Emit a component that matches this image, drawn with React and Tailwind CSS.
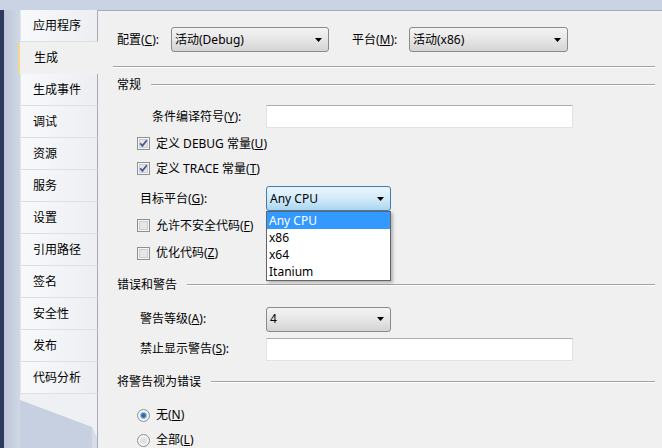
import React from "react";

const tabs = ["应用程序", "生成", "生成事件", "调试", "资源", "服务", "设置", "引用路径", "签名", "安全性", "发布", "代码分析"];

const Arrow = () => (
  <svg width="7" height="4" viewBox="0 0 7 4" className="shrink-0">
    <polygon points="0,0 7,0 3.5,4" fill="#000" />
  </svg>
);

const Check = ({ checked }) => (
  <svg width="13" height="13" viewBox="0 0 13 13" className="shrink-0">
    <rect x="0.5" y="0.5" width="12" height="12" fill="#f6f6f6" stroke="#8e8f8f" />
    <rect x="2.5" y="2.5" width="8" height="8" fill="#e6e6e6" stroke="#cdcdcd" />
    {checked && <path d="M3.2 6.2 L5.4 8.8 L9.8 3.2" stroke="#42559a" strokeWidth="1.7" fill="none" />}
  </svg>
);

const Radio = ({ checked }) => (
  <svg width="13" height="13" viewBox="0 0 13 13" className="shrink-0">
    <circle cx="6.5" cy="6.5" r="6" fill="#f4f4f4" stroke="#8e8f8f" />
    {checked ? (
      <>
        <circle cx="6.5" cy="6.5" r="3.6" fill="#9cc3e6" />
        <circle cx="6.5" cy="6.5" r="2.4" fill="#2c6cb4" />
      </>
    ) : (
      <circle cx="6.5" cy="6.5" r="3.6" fill="#e2e2e2" />
    )}
  </svg>
);

const Select = ({ value, width, focused }) => (
  <div
    className={`h-[25px] ${width} rounded-[3px] border flex items-center justify-between pl-[3px] pr-[6px] ${
      focused
        ? "border-[#3c7fb1] bg-gradient-to-b from-[#eaf6fd] via-[#d3ebf9] to-[#a9d6f1]"
        : "border-[#8a8a8a] bg-gradient-to-b from-[#f4f4f4] via-[#e6e6e6] to-[#d4d4d4]"
    }`}
  >
    <span>{value}</span>
    <Arrow />
  </div>
);

const TextBox = () => (
  <div className="h-[23px] w-[307px] bg-white border border-[#dde3ea] border-t-[#abadb3]" />
);

const Group = ({ title }) => (
  <div className="h-[18px] flex items-center pl-[19px] pr-[7px]">
    <span>{title}</span>
    <div className="flex-1 ml-[10px] h-[2px] border-t border-[#a3a3a3] border-b border-b-white" />
  </div>
);

const CheckRow = ({ checked, children, className }) => (
  <div className={`h-[16px] flex items-center pl-[39px] gap-[6px] ${className}`}>
    <Check checked={checked} />
    <span>{children}</span>
  </div>
);

export default function App() {
  return (
    <div className="w-[662px] h-[448px] overflow-hidden bg-[#c8d2e1] flex flex-col font-['Noto_Sans','Noto_Sans_CJK_SC',sans-serif] text-[12px] text-black leading-none">
      <div className="h-[10px] shrink-0 bg-[#c9d3e3]" />
      <div className="flex flex-1 min-h-0">
        <div className="w-[4px] bg-[#2c3b5d]" />
        <div className="w-[16px] bg-gradient-to-r from-[#bcc7d8] to-[#d0d8e5]" />

        {/* tab strip */}
        <div className="w-[78px] flex flex-col">
          {tabs.map((t, i) =>
            i === 1 ? (
              <div
                key={t}
                className="h-[32px] -ml-[2px] pl-[14px] flex items-center bg-[#f0f0f0] border-l-2 border-[#f3d88e] rounded-l-[2px]"
              >
                {t}
              </div>
            ) : (
              <div
                key={t}
                className="h-[32px] pl-[12px] flex items-center bg-gradient-to-r from-[#f8f9fb] to-[#eceef2] border-r border-[#a5adb9] border-b border-b-[#dcdfe5] border-l border-l-[#e2e6ec]"
              >
                {t}
              </div>
            )
          )}
          <div className="flex-1 relative bg-[#c6d0e0] border-r border-[#a5adb9]">
            <svg width="77" height="55" viewBox="0 0 77 55" className="absolute left-0 top-0">
              <polygon points="0,0 77,0 77,44 72,33 0,6" fill="#eef0f4" />
              <polygon points="72,33 77,44 77,55 72,55" fill="#d6dde8" />
            </svg>
          </div>
        </div>

        {/* content */}
        <div className="flex-1 bg-[#f0f0f0] border-t border-[#a5adb9] flex flex-col relative">
          <div className="mt-[16px] h-[25px] flex items-center pl-[19px]">
            <span className="w-[54px]">
              配置(<u>C</u>):
            </span>
            <Select value="活动(Debug)" width="w-[158px]" />
            <span className="ml-[23px] w-[57px]">
              平台(<u>M</u>):
            </span>
            <Select value="活动(x86)" width="w-[159px]" />
          </div>

          <div className="mt-[14px] ml-[15px] mr-[7px] h-[2px] border-t border-[#a3a3a3] border-b border-b-white" />

          <div className="mt-[8px]">
            <Group title="常规" />
          </div>

          <div className="mt-[11px] h-[23px] flex items-center pl-[54px]">
            <span className="w-[114px]">
              条件编译符号(<u>Y</u>):
            </span>
            <TextBox />
          </div>

          <CheckRow checked className="mt-[8px]">
            定义 DEBUG 常量(<u>U</u>)
          </CheckRow>
          <CheckRow checked className="mt-[10px]">
            定义 TRACE 常量(<u>T</u>)
          </CheckRow>

          <div className="mt-[10px] h-[25px] flex items-center pl-[42px]">
            <span className="w-[126px]">
              目标平台(<u>G</u>):
            </span>
            <Select value="Any CPU" width="w-[125px]" focused />
          </div>

          <CheckRow className="mt-[7px]">
            允许不安全代码(<u>F</u>)
          </CheckRow>
          <CheckRow className="mt-[12px]">
            优化代码(<u>Z</u>)
          </CheckRow>

          <div className="mt-[15px]">
            <Group title="错误和警告" />
          </div>

          <div className="mt-[13px] h-[25px] flex items-center pl-[42px]">
            <span className="w-[126px]">
              警告等级(<u>A</u>):
            </span>
            <Select value="4" width="w-[125px]" />
          </div>

          <div className="mt-[6px] h-[23px] flex items-center pl-[42px]">
            <span className="w-[126px]">
              禁止显示警告(<u>S</u>):
            </span>
            <TextBox />
          </div>

          <div className="mt-[12px]">
            <Group title="将警告视为错误" />
          </div>

          <div className="mt-[17px] h-[16px] flex items-center pl-[39px] gap-[6px]">
            <Radio checked />
            <span>
              无(<u>N</u>)
            </span>
          </div>
          <div className="mt-[10px] h-[16px] flex items-center pl-[39px] gap-[6px]">
            <Radio />
            <span>
              全部(<u>L</u>)
            </span>
          </div>

          {/* open dropdown list */}
          <div className="absolute left-[168px] top-[200px] w-[125px] bg-white border border-[#646464] shadow-[2px_2px_3px_rgba(0,0,0,0.25)] flex flex-col">
            <div className="h-[17px] flex items-center pl-[2px] bg-[#3399ff] text-white">Any CPU</div>
            <div className="h-[17px] flex items-center pl-[2px]">x86</div>
            <div className="h-[17px] flex items-center pl-[2px]">x64</div>
            <div className="h-[17px] flex items-center pl-[2px]">Itanium</div>
          </div>
        </div>
      </div>
    </div>
  );
}
